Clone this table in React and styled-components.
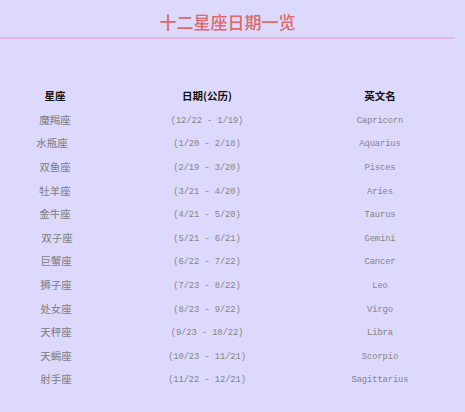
import styled, { createGlobalStyle } from 'styled-components';

const GlobalStyle = createGlobalStyle`
  html, body {
    margin: 0;
    padding: 0;
    background: #ddd9fd;
  }
`

const Page = styled.div`
  width: 465px;
  height: 412px;
  background: #ddd9fd;
  overflow: hidden;
`

const Header = styled.div`
  width: 455px;
  height: 39px;
  border-bottom: 2px solid #e6b9da;
  display: flex;
  align-items: center;
  justify-content: center;
  box-sizing: border-box;
  padding-top: 6px;
`

const Title = styled.h1`
  margin: 0;
  font-family: "Noto Sans CJK SC", sans-serif;
  font-size: 17px;
  font-weight: 500;
  color: #e0676a;
`

const Table = styled.div`
  margin-top: 45px;
  width: 456px;
  display: grid;
  grid-template-columns: 110px 194px 152px;
  grid-auto-rows: 23.6px;
  align-items: center;
  justify-items: center;
`

const HeadCell = styled.div`
  font-family: "Noto Sans CJK SC", sans-serif;
  font-size: 10.5px;
  font-weight: 700;
  color: #111;
`

const NameCell = styled.div`
  font-family: "Noto Sans CJK SC", sans-serif;
  font-size: 10.5px;
  color: #7c7c7c;
  margin-left: ${p => p.$shift || 0}px;
`

const MonoCell = styled.div`
  font-family: "Liberation Mono", "DejaVu Sans Mono", monospace;
  font-size: 8.8px;
  letter-spacing: -0.1px;
  color: #858585;
  white-space: pre;
  padding-top: 3px;
`

const signs = [
  ['魔羯座', '(12/22 - 1/19)', 'Capricorn', 0],
  ['水瓶座', '(1/20 - 2/18)', 'Aquarius', -6],
  ['双鱼座', '(2/19 - 3/20)', 'Pisces', 0],
  ['牡羊座', '(3/21 - 4/20)', 'Aries', 0],
  ['金牛座', '(4/21 - 5/20)', 'Taurus', 0],
  ['双子座', '(5/21 - 6/21)', 'Gemini', 4],
  ['巨蟹座', '(6/22 - 7/22)', 'Cancer', 2],
  ['狮子座', '(7/23 - 8/22)', 'Leo', 2],
  ['处女座', '(8/23 - 9/22)', 'Virgo', 2],
  ['天秤座', '(9/23 - 10/22)', 'Libra', 2],
  ['天蝎座', '(10/23 - 11/21)', 'Scorpio', 2],
  ['射手座', '(11/22 - 12/21)', 'Sagittarius', 2],
];

export default function App() {
  return (
    <Page>
      <GlobalStyle />
      <Header>
        <Title>十二星座日期一览</Title>
      </Header>
      <Table>
        <HeadCell>星座</HeadCell>
        <HeadCell>日期(公历)</HeadCell>
        <HeadCell>英文名</HeadCell>
        {signs.map(([name, dates, en, shift]) => (
          <>
            <NameCell key={name} $shift={shift}>{name}</NameCell>
            <MonoCell key={name + 'd'}>{dates}</MonoCell>
            <MonoCell key={name + 'e'}>{en}</MonoCell>
          </>
        ))}
      </Table>
    </Page>
  );
}
